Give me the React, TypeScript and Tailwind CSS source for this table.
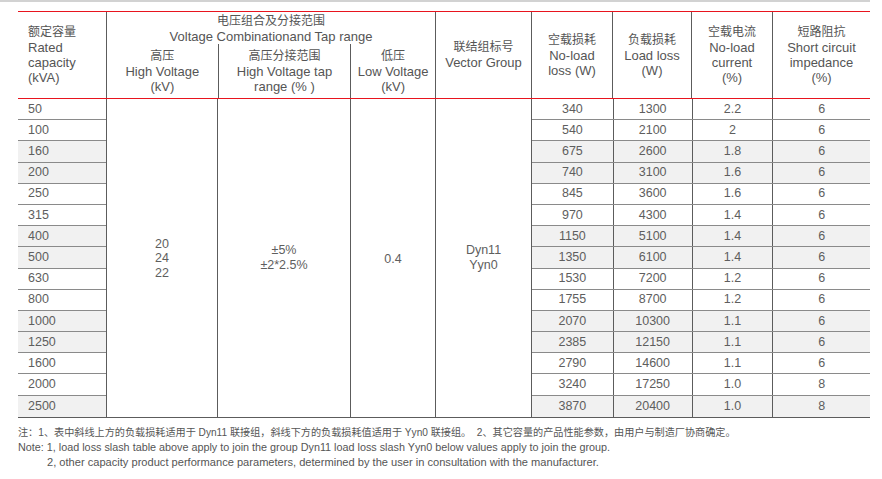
import React from "react";

const caps = ["50","100","160","200","250","315","400","500","630","800","1000","1250","1600","2000","2500"];
const data: [string,string,string,string][] = [
  ["340","1300","2.2","6"],
  ["540","2100","2","6"],
  ["675","2600","1.8","6"],
  ["740","3100","1.6","6"],
  ["845","3600","1.6","6"],
  ["970","4300","1.4","6"],
  ["1150","5100","1.4","6"],
  ["1350","6100","1.4","6"],
  ["1530","7200","1.2","6"],
  ["1755","8700","1.2","6"],
  ["2070","10300","1.1","6"],
  ["2385","12150","1.1","6"],
  ["2790","14600","1.1","6"],
  ["3240","17250","1.0","8"],
  ["3870","20400","1.0","8"],
];

const shaded = (i: number) => Math.floor(i / 2) % 2 === 1;

function HeadCell({ lines, w }: { lines: string[]; w: string }) {
  return (
    <div className={`${w} border-l border-[#5c5c5c] flex flex-col items-center justify-center text-center`}>
      {lines.map((l, i) => (
        <div key={i} className={i === 0 && /[\u4e00-\u9fff]/.test(l) ? "text-[12px] leading-[15px]" : "text-[13px] leading-[15px]"}>
          {l}
        </div>
      ))}
    </div>
  );
}

export default function App() {
  return (
    <div className="w-[882px] h-[479px] bg-white overflow-hidden font-['Liberation_Sans','Noto_Sans_CJK_SC',sans-serif] text-[#555]">
      <div className="h-[2px] w-[870px] bg-[#d2d2d2]" />
      <div className="ml-[18px] mt-[9px] w-[852px] border-t border-[#e8141e]">
        {/* header */}
        <div className="flex h-[87px] border-b border-[#e8141e]">
          <div className="w-[88px] flex flex-col justify-center pl-[10px]">
            <div className="text-[12px] leading-[15px]">额定容量</div>
            <div className="text-[13px] leading-[15px]">Rated</div>
            <div className="text-[13px] leading-[15px]">capacity</div>
            <div className="text-[13px] leading-[15px]">(kVA)</div>
          </div>
          <div className="w-[329px] border-l border-[#5c5c5c] flex flex-col">
            <div className="h-[32px] flex flex-col items-center justify-center text-center pt-[1px]">
              <div className="text-[12px] leading-[15px]">电压组合及分接范围</div>
              <div className="text-[13px] leading-[15px]">Voltage Combinationand Tap range</div>
            </div>
            <div className="flex flex-1">
              <div className="w-[111px] flex flex-col items-center justify-center text-center">
                <div className="text-[12px] leading-[15px]">高压</div>
                <div className="text-[13px] leading-[15px]">High Voltage</div>
                <div className="text-[13px] leading-[15px]">(kV)</div>
              </div>
              <div className="w-[133px] border-l border-[#5c5c5c] flex flex-col items-center justify-center text-center">
                <div className="text-[12px] leading-[15px]">高压分接范围</div>
                <div className="text-[13px] leading-[15px]">High Voltage tap</div>
                <div className="text-[13px] leading-[15px]">range (% )</div>
              </div>
              <div className="w-[85px] border-l border-[#5c5c5c] flex flex-col items-center justify-center text-center">
                <div className="text-[12px] leading-[15px]">低压</div>
                <div className="text-[13px] leading-[15px]">Low Voltage</div>
                <div className="text-[13px] leading-[15px]">(kV)</div>
              </div>
            </div>
          </div>
          <HeadCell w="w-[96px]" lines={["联结组标号", "Vector Group"]} />
          <HeadCell w="w-[81px]" lines={["空载损耗", "No-load", "loss (W)"]} />
          <HeadCell w="w-[79px]" lines={["负载损耗", "Load loss", "(W)"]} />
          <HeadCell w="w-[81px]" lines={["空载电流", "No-load", "current", "(%)"]} />
          <HeadCell w="w-[98px]" lines={["短路阻抗", "Short circuit", "impedance", "(%)"]} />
        </div>
        {/* body */}
        <div className="flex border-b border-[#5c5c5c] text-[12.5px] text-[#5e5e5e]">
          <div className="w-[88px] flex flex-col">
            {caps.map((c, i) => (
              <div
                key={c}
                className={`h-[21.2px] flex items-center pl-[10px] ${i < caps.length - 1 ? "border-b border-[#8a8a8a]" : ""} ${shaded(i) ? "bg-[#f1f1f1]" : "bg-white"}`}
              >
                {c}
              </div>
            ))}
          </div>
          <div className="w-[111px] border-l border-[#5c5c5c] flex flex-col items-center justify-center leading-[14.5px] pt-[1px]">
            <div>20</div>
            <div>24</div>
            <div>22</div>
          </div>
          <div className="w-[133px] border-l border-[#5c5c5c] flex flex-col items-center justify-center leading-[14.5px]">
            <div>±5%</div>
            <div>±2*2.5%</div>
          </div>
          <div className="w-[85px] border-l border-[#5c5c5c] flex items-center justify-center pt-[2px]">0.4</div>
          <div className="w-[96px] border-l border-[#5c5c5c] flex flex-col items-center justify-center leading-[14.5px]">
            <div>Dyn11</div>
            <div>Yyn0</div>
          </div>
          <div className="w-[339px] border-l border-[#5c5c5c] flex flex-col">
            {data.map((r, i) => (
              <div
                key={i}
                className={`h-[21.2px] flex ${i < data.length - 1 ? "border-b border-[#8a8a8a]" : ""} ${shaded(i) ? "bg-[#f1f1f1]" : "bg-white"}`}
              >
                <div className="w-[81px] flex items-center justify-center">{r[0]}</div>
                <div className="w-[79px] border-l border-[#5c5c5c] flex items-center justify-center">{r[1]}</div>
                <div className="w-[81px] border-l border-[#5c5c5c] flex items-center justify-center">{r[2]}</div>
                <div className="w-[98px] border-l border-[#5c5c5c] flex items-center justify-center">{r[3]}</div>
              </div>
            ))}
          </div>
        </div>
      </div>
      {/* notes */}
      <div className="ml-[18px] mt-[7px] text-[#555] leading-[15px] whitespace-nowrap">
        <div className="text-[10.15px]">注：1、表中斜线上方的负载损耗适用于 Dyn11 联接组，斜线下方的负载损耗值适用于 Yyn0 联接组。&nbsp;&nbsp;2、其它容量的产品性能参数，由用户与制造厂协商确定。</div>
        <div className="text-[10.8px]">Note: 1, load loss slash table above apply to join the group Dyn11 load loss slash Yyn0 below values apply to join the group.</div>
        <div className="text-[11.1px] pl-[29px]">2, other capacity product performance parameters, determined by the user in consultation with the manufacturer.</div>
      </div>
    </div>
  );
}
